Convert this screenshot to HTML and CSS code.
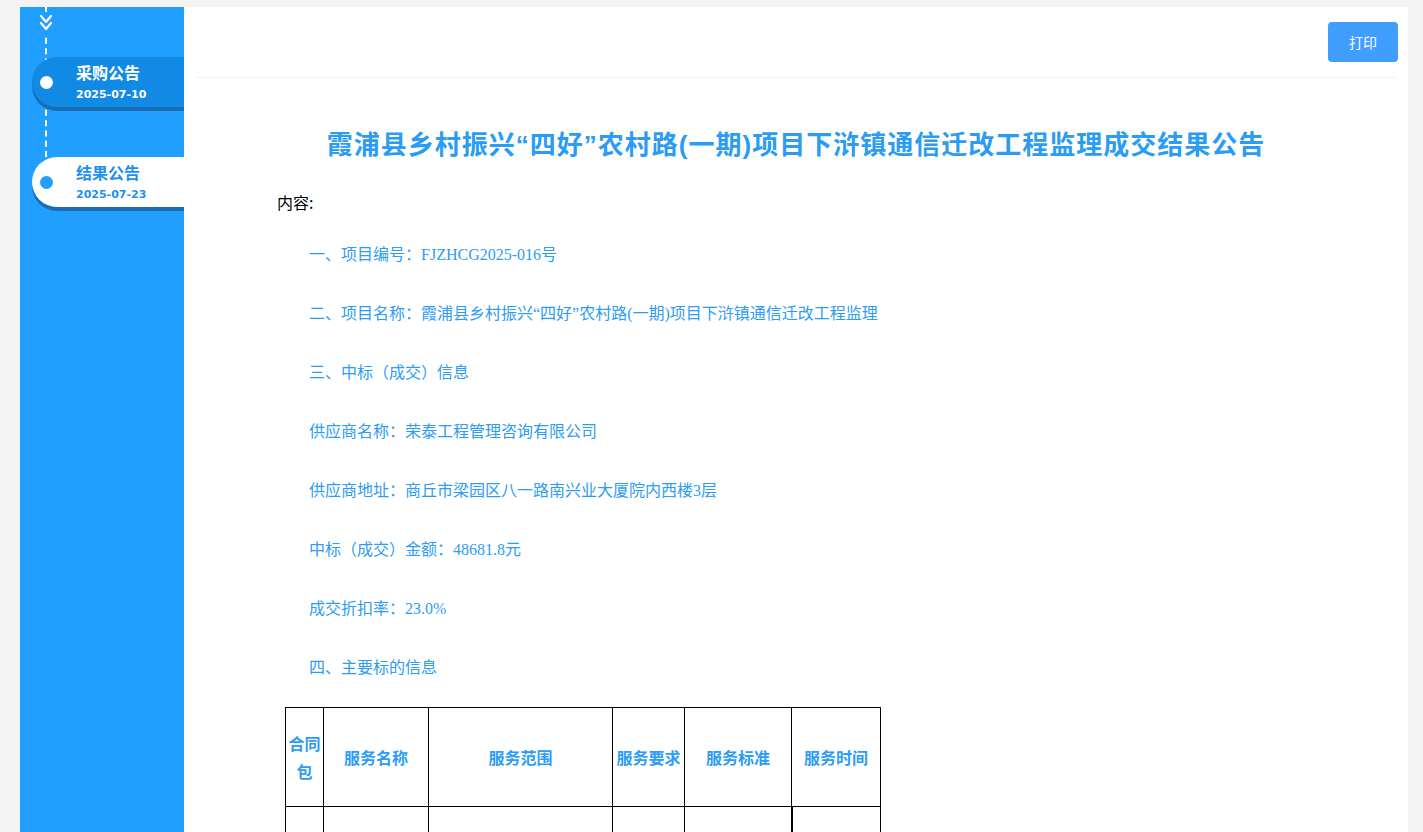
FILE: index.html
```html
<!DOCTYPE html>
<html lang="zh-CN">
<head>
  <meta charset="UTF-8" />
  <meta name="viewport" content="width=device-width, initial-scale=1.0"/>
  <title>成交结果公告</title>
  <link rel="stylesheet" href="styles.css">
</head>
<body>
  <div class="page">
    <div class="sidebar">
      <div class="timeline-line"></div>
      <svg class="chevron" width="14" height="22" viewBox="0 0 14 22">
        <path d="M2 4 L7 10 L12 4 M2 11 L7 17 L12 11" fill="none" stroke="#fff" stroke-width="2.2" stroke-linecap="round" stroke-linejoin="round"/>
      </svg>
      <div class="node active">
        <span class="dot"></span>
        <div class="node-text">
          <div class="node-title">采购公告</div>
          <div class="node-date">2025-07-10</div>
        </div>
      </div>
      <div class="node current">
        <span class="dot"></span>
        <div class="node-text">
          <div class="node-title">结果公告</div>
          <div class="node-date">2025-07-23</div>
        </div>
      </div>
    </div>

    <div class="main">
      <div class="toolbar">
        <button class="print-btn">打印</button>
      </div>
      <div class="article">
        <h1 class="title">霞浦县乡村振兴“四好”农村路(一期)项目下浒镇通信迁改工程监理成交结果公告</h1>
        <div class="content">
          <div class="content-label">内容:</div>
          <p>一、项目编号：FJZHCG2025-016号</p>
          <p>二、项目名称：霞浦县乡村振兴“四好”农村路(一期)项目下浒镇通信迁改工程监理</p>
          <p>三、中标（成交）信息</p>
          <p>供应商名称：荣泰工程管理咨询有限公司</p>
          <p>供应商地址：商丘市梁园区八一路南兴业大厦院内西楼3层</p>
          <p>中标（成交）金额：48681.8元</p>
          <p>成交折扣率：23.0%</p>
          <p>四、主要标的信息</p>
          <table class="info-table">
            <tr class="head-row">
              <th class="c1">合同包</th>
              <th class="c2">服务名称</th>
              <th class="c3">服务范围</th>
              <th class="c4">服务要求</th>
              <th class="c5">服务标准</th>
              <th class="c6">服务时间</th>
            </tr>
            <tr class="body-row">
              <td></td>
              <td></td>
              <td></td>
              <td></td>
              <td></td>
              <td class="thick-left"></td>
            </tr>
          </table>
        </div>
      </div>
    </div>
  </div>
</body>
</html>
```

FILE: styles.css
```css
html, body {
  margin: 0;
  padding: 0;
  height: 100%;
  overflow: hidden;
}
body {
  background-color: #f4f4f4;
  font-family: "Noto Sans CJK SC", "Noto Sans", sans-serif;
  color: #333;
}
.page {
  display: flex;
  padding: 7px 15px 0 20px;
  height: calc(100% - 7px);
}
.sidebar {
  position: relative;
  width: 164px;
  flex-shrink: 0;
  background-color: #209fff;
  padding-top: 50px;
  box-sizing: border-box;
}
.timeline-line {
  position: absolute;
  left: 25px;
  top: 0;
  height: 150px;
  width: 0;
  border-left: 2px dashed #fff;
}
.chevron {
  position: absolute;
  left: 19px;
  top: 5px;
  background-color: #209fff;
}
.node {
  position: relative;
  display: flex;
  align-items: center;
  height: 50px;
  margin-left: 12px;
  border-radius: 25px 0 0 25px;
  box-shadow: 0 4px 0 #1b6db3;
}
.node + .node {
  margin-top: 50px;
}
.node.active {
  background-color: #118ae6;
  color: #fff;
}
.node.current {
  background-color: #fff;
  color: #1e90f0;
}
.dot {
  width: 13px;
  height: 13px;
  border-radius: 50%;
  margin-left: 8px;
  flex-shrink: 0;
}
.node.active .dot {
  background-color: #fff;
}
.node.current .dot {
  background-color: #209fff;
}
.node-text {
  margin-left: 23px;
}
.node-title {
  font-size: 16px;
  font-weight: bold;
  line-height: 22px;
}
.node-date {
  font-family: "DejaVu Sans", "Noto Sans", sans-serif;
  font-size: 11px;
  font-weight: bold;
  line-height: 16px;
  margin-top: 4px;
}
.main {
  flex: 1;
  background-color: #fff;
  min-width: 0;
}
.toolbar {
  display: flex;
  justify-content: flex-end;
  align-items: flex-start;
  height: 70px;
  margin: 0 12px 0 13px;
  border-bottom: 1px solid #eef0f3;
}
.print-btn {
  margin-top: 15px;
  margin-right: -2px;
  width: 70px;
  height: 40px;
  background-color: #409eff;
  color: #fff;
  border: none;
  border-radius: 4px;
  font-size: 14px;
  font-family: "Noto Sans CJK SC", sans-serif;
  cursor: pointer;
}
.article {
  padding-top: 49px;
}
.title {
  margin: 0;
  text-align: center;
  font-size: 26px;
  line-height: 36px;
  font-weight: bold;
  color: #2b9cf4;
  font-family: "Liberation Sans", "Noto Sans CJK SC", sans-serif;
  letter-spacing: 1px;
}
.content {
  margin: 27px 0 0 93px;
}
.content-label {
  font-size: 16px;
  line-height: 24px;
  color: #000;
}
.content p {
  margin: 29px 0 0 0;
  line-height: 24px;
  font-size: 16px;
  text-indent: 32px;
  color: #2d9cf4;
  font-family: "Liberation Serif", "Noto Sans CJK SC", serif;
}
.content p + p {
  margin-top: 35px;
}
.info-table {
  margin: 27px 0 0 8px;
  border-collapse: collapse;
  table-layout: fixed;
}
.info-table th, .info-table td {
  border: 1px solid #000;
  padding: 0 2px;
}
.info-table th {
  height: 98px;
  font-size: 16px;
  font-weight: bold;
  color: #2d9cf4;
  line-height: 28px;
  text-align: center;
}
.info-table td {
  height: 60px;
}
.info-table td.thick-left {
  border-left: 2px solid #000;
}
.c1 { width: 33px; }
.c2 { width: 100px; }
.c3 { width: 179px; }
.c4 { width: 67px; }
.c5 { width: 102px; }
.c6 { width: 84px; }
```
